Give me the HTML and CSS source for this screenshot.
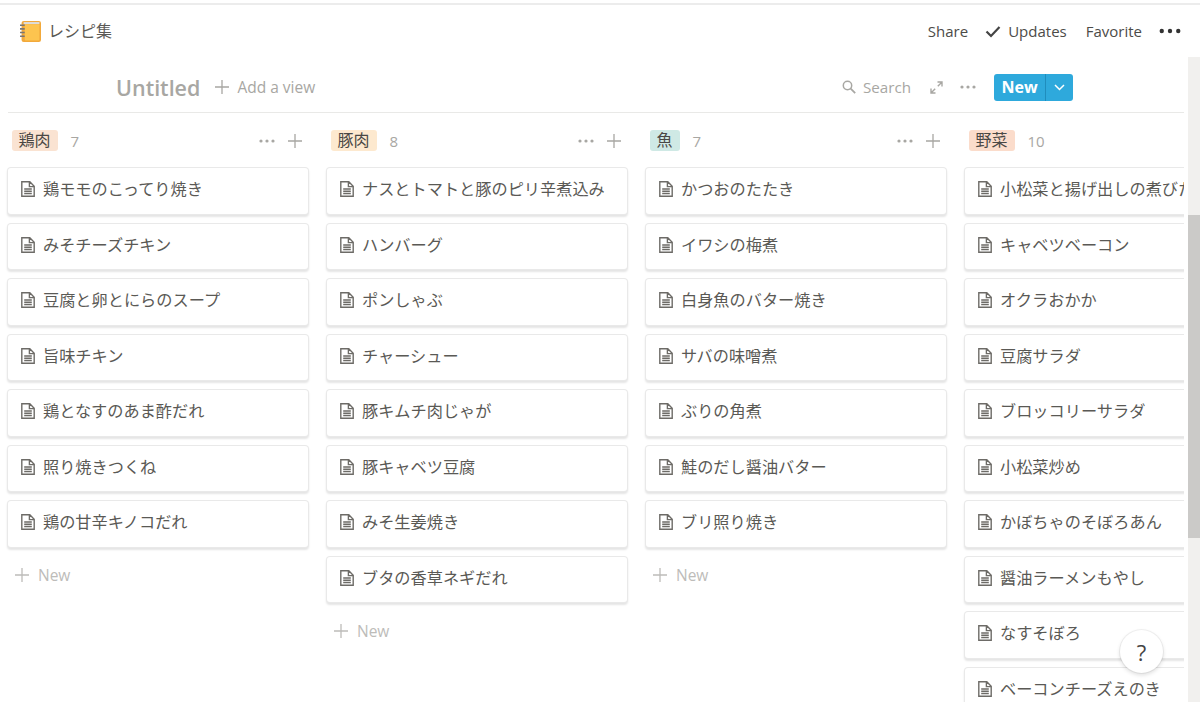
FILE: index.html
```html
<!DOCTYPE html>
<html lang="ja">
<head>
<meta charset="utf-8">
<title>レシピ集</title>
<link rel="stylesheet" href="styles.css">
</head>
<body>
<svg class="defs" width="0" height="0" aria-hidden="true">
  <symbol id="doc" viewBox="0 0 14 16"><path d="M.8.8h8L13.200 5.200V15.200H.8z M8.400.8v4.800H13.200 M3.200 8h7.600 M3.200 10.200h7.600 M3.200 12.500h7.600" fill="none" stroke="currentColor" stroke-width="1.400"/></symbol>
  <symbol id="plus" viewBox="0 0 14 14"><path d="M7 0v14M0 7h14" fill="none" stroke="currentColor" stroke-width="1.300"/></symbol>
  <symbol id="dots" viewBox="0 0 16 4"><circle cx="2" cy="2" r="1.600" fill="currentColor"/><circle cx="8" cy="2" r="1.600" fill="currentColor"/><circle cx="14" cy="2" r="1.600" fill="currentColor"/></symbol>
</svg>
<header class="topbar">
  <div class="crumb">
    <svg class="notebook" viewBox="0 0 20 20" width="21" height="21"><rect x="1.500" y="0" width="18.500" height="20" rx="2" fill="#f2a93b"/><rect x="3.500" y="1" width="15" height="2" fill="#ddd"/><rect x="4.500" y="3" width="14" height="15.500" rx="1" fill="#fdc44f"/><path d="M0 4h4.500M0 7.500h4.500M0 11h4.500M0 14.500h4.500" stroke="#777" stroke-width="1.500"/></svg>
    <span>レシピ集</span>
  </div>
  <nav class="actions">
    <span>Share</span>
    <span class="updates"><svg width="16" height="13" viewBox="0 0 16 13"><path d="M1.500 6.500l4.500 4.500 8.500-9" fill="none" stroke="#444" stroke-width="2.200"/></svg>Updates</span>
    <span>Favorite</span>
    <svg class="more" width="22" height="6"><use href="#dots"/></svg>
  </nav>
</header>
<div class="page">
  <main class="main">
    <div class="toolbar">
      <div class="views">
        <span class="view-name">Untitled</span>
        <span class="add-view"><svg width="14" height="14"><use href="#plus"/></svg>Add a view</span>
      </div>
      <div class="tools">
        <span class="search"><svg width="14" height="14" viewBox="0 0 14 14"><circle cx="5.500" cy="5.500" r="4.200" fill="none" stroke="currentColor" stroke-width="1.500"/><path d="M8.700 8.700l4.500 4.500" stroke="currentColor" stroke-width="1.800"/></svg>Search</span>
        <svg class="expand" width="13" height="13" viewBox="0 0 13 13"><path d="M7.500 1h4.500v4.500M12 1L7.800 5.200M5.500 12H1V7.500M1 12l4.200-4.200" fill="none" stroke="currentColor" stroke-width="1.400"/></svg>
        <svg class="tool-dots" width="16" height="4"><use href="#dots"/></svg>
        <div class="new-btn"><span class="new-label">New</span><span class="new-caret"><svg width="11" height="7" viewBox="0 0 11 7"><path d="M1 1l4.500 4.500L10 1" fill="none" stroke="#fff" stroke-width="1.500"/></svg></span></div>
      </div>
    </div>
    <div class="board">
      <section class="column">
        <div class="col-head"><span class="tag tag-red">鶏肉</span><span class="count">7</span><span class="col-tools"><svg width="16" height="4"><use href="#dots"/></svg><svg width="14" height="14"><use href="#plus"/></svg></span></div>
        <div class="card"><svg class="doc"><use href="#doc"/></svg>鶏モモのこってり焼き</div>
        <div class="card"><svg class="doc"><use href="#doc"/></svg>みそチーズチキン</div>
        <div class="card"><svg class="doc"><use href="#doc"/></svg>豆腐と卵とにらのスープ</div>
        <div class="card"><svg class="doc"><use href="#doc"/></svg>旨味チキン</div>
        <div class="card"><svg class="doc"><use href="#doc"/></svg>鶏となすのあま酢だれ</div>
        <div class="card"><svg class="doc"><use href="#doc"/></svg>照り焼きつくね</div>
        <div class="card"><svg class="doc"><use href="#doc"/></svg>鶏の甘辛キノコだれ</div>
        <div class="add-card"><svg width="14" height="14"><use href="#plus"/></svg>New</div>
      </section>
      <section class="column">
        <div class="col-head"><span class="tag tag-orange">豚肉</span><span class="count">8</span><span class="col-tools"><svg width="16" height="4"><use href="#dots"/></svg><svg width="14" height="14"><use href="#plus"/></svg></span></div>
        <div class="card"><svg class="doc"><use href="#doc"/></svg>ナスとトマトと豚のピリ辛煮込み</div>
        <div class="card"><svg class="doc"><use href="#doc"/></svg>ハンバーグ</div>
        <div class="card"><svg class="doc"><use href="#doc"/></svg>ポンしゃぶ</div>
        <div class="card"><svg class="doc"><use href="#doc"/></svg>チャーシュー</div>
        <div class="card"><svg class="doc"><use href="#doc"/></svg>豚キムチ肉じゃが</div>
        <div class="card"><svg class="doc"><use href="#doc"/></svg>豚キャベツ豆腐</div>
        <div class="card"><svg class="doc"><use href="#doc"/></svg>みそ生姜焼き</div>
        <div class="card"><svg class="doc"><use href="#doc"/></svg>ブタの香草ネギだれ</div>
        <div class="add-card"><svg width="14" height="14"><use href="#plus"/></svg>New</div>
      </section>
      <section class="column">
        <div class="col-head"><span class="tag tag-teal">魚</span><span class="count">7</span><span class="col-tools"><svg width="16" height="4"><use href="#dots"/></svg><svg width="14" height="14"><use href="#plus"/></svg></span></div>
        <div class="card"><svg class="doc"><use href="#doc"/></svg>かつおのたたき</div>
        <div class="card"><svg class="doc"><use href="#doc"/></svg>イワシの梅煮</div>
        <div class="card"><svg class="doc"><use href="#doc"/></svg>白身魚のバター焼き</div>
        <div class="card"><svg class="doc"><use href="#doc"/></svg>サバの味噌煮</div>
        <div class="card"><svg class="doc"><use href="#doc"/></svg>ぶりの角煮</div>
        <div class="card"><svg class="doc"><use href="#doc"/></svg>鮭のだし醤油バター</div>
        <div class="card"><svg class="doc"><use href="#doc"/></svg>ブリ照り焼き</div>
        <div class="add-card"><svg width="14" height="14"><use href="#plus"/></svg>New</div>
      </section>
      <section class="column">
        <div class="col-head"><span class="tag tag-salmon">野菜</span><span class="count">10</span></div>
        <div class="card"><svg class="doc"><use href="#doc"/></svg>小松菜と揚げ出しの煮びたし</div>
        <div class="card"><svg class="doc"><use href="#doc"/></svg>キャベツベーコン</div>
        <div class="card"><svg class="doc"><use href="#doc"/></svg>オクラおかか</div>
        <div class="card"><svg class="doc"><use href="#doc"/></svg>豆腐サラダ</div>
        <div class="card"><svg class="doc"><use href="#doc"/></svg>ブロッコリーサラダ</div>
        <div class="card"><svg class="doc"><use href="#doc"/></svg>小松菜炒め</div>
        <div class="card"><svg class="doc"><use href="#doc"/></svg>かぼちゃのそぼろあん</div>
        <div class="card"><svg class="doc"><use href="#doc"/></svg>醤油ラーメンもやし</div>
        <div class="card"><svg class="doc"><use href="#doc"/></svg>なすそぼろ</div>
        <div class="card"><svg class="doc"><use href="#doc"/></svg>ベーコンチーズえのき</div>
      </section>
    </div>
  </main>
  <div class="scrollbar"><div class="scroll-thumb"></div></div>
</div>
<button class="help">?</button>
</body>
</html>
```

FILE: styles.css
```css
* { box-sizing: border-box; }
html, body { height: 100%; }
body {
  margin: 0;
  height: 702px;
  overflow: hidden;
  background: #fff;
  color: #5a5955;
  font-family: "Open Sans", "Noto Sans CJK JP", sans-serif;
  font-size: 16px;
  font-weight: 400;
  display: flex;
  flex-direction: column;
  padding-top: 3px;
}
.defs { position: absolute; }
.topbar {
  height: 54px;
  flex: none;
  display: flex;
  align-items: center;
  justify-content: space-between;
  padding: 0 19px 0 20px;
  border-top: 2px solid #ececec;
}
.crumb { display: flex; align-items: center; gap: 7px; line-height: 20px; }
.actions { display: flex; align-items: center; font-size: 15px; color: #4c4b48; }
.updates { display: flex; align-items: center; gap: 7px; margin: 0 19px 0 17px; }
.more { margin-left: 17px; color: #333; }
.page { flex: 1; display: flex; min-height: 0; }
.main { width: 1184px; flex: none; overflow: hidden; padding-left: 8px; margin-right: 4px; }
.toolbar {
  height: 56px;
  display: flex;
  justify-content: space-between;
  align-items: center;
  border-bottom: 1px solid #e9e9e7;
  padding: 5px 111px 0 108px;
}
.views { display: flex; align-items: center; gap: 15px; }
.view-name { font-size: 21.500px; font-weight: 600; color: #a8a7a3; }
.add-view { display: flex; align-items: center; gap: 8px; font-size: 15.500px; color: #a8a7a3; }
.tools { display: flex; align-items: center; color: #a8a7a3; }
.search { display: flex; align-items: center; gap: 7px; font-size: 15.200px; color: #a8a7a3; }
.expand { margin-left: 19px; }
.tool-dots { margin-left: 17px; }
.new-btn { margin-left: 18px; display: flex; height: 27px; width: 79px; border-radius: 3px; background: #2ea9dc; color: #fff; font-weight: 700; font-size: 16px; }
.new-label { width: 52px; display: flex; align-items: center; justify-content: center; border-right: 1px solid #1f8dbd; }
.new-caret { flex: 1; display: flex; align-items: center; justify-content: center; }
.board { display: flex; gap: 17px; width: 1400px; margin-left: -1px; }
.column { width: 302px; flex: none; }
.col-head { height: 54px; display: flex; align-items: center; padding: 3px 7px 2px 4.500px; }
.tag { height: 21px; line-height: 21px; padding: 0 7px; border-radius: 3px; color: #4a4845; }
.tag-red { background: #fae3d2; }
.tag-orange { background: #fde9cf; }
.tag-teal { background: #cfe9e5; }
.tag-salmon { background: #fbdccb; }
.count { margin-left: 13px; font-size: 15px; color: #a8a7a3; }
.col-tools { margin-left: auto; display: flex; align-items: center; gap: 13px; color: #a8a7a3; }
.card {
  height: 47.500px;
  margin-bottom: 8px;
  display: flex;
  align-items: center;
  gap: 8px;
  padding: 0 0 3px 14px;
  white-space: nowrap;
  overflow: hidden;
  background: #fff;
  border-radius: 4px;
  box-shadow: inset 0 0 0 1px rgba(15,15,15,.09), 0 2px 2px rgba(15,15,15,.11);
  font-size: 16.200px;
  line-height: 22px;
}
.doc { width: 14px; height: 16px; flex: none; color: #6d6b67; }
.add-card { display: flex; align-items: center; gap: 9px; padding: 2px 0 0 8px; height: 30px; font-size: 15.500px; color: #bdbcb9; margin-top: 11.500px; }
.scrollbar { width: 12px; flex: none; background: #f1f0ee; }
.scroll-thumb { height: 323px; margin-top: 158px; background: #cbcac8; }
.help {
  position: absolute;
  left: 1120px;
  top: 630px;
  width: 43px;
  height: 43px;
  border-radius: 50%;
  border: 0;
  background: #fff;
  box-shadow: 0 0 0 1px rgba(15,15,15,.05), 0 2px 4px rgba(15,15,15,.14);
  color: #444;
  font: 22px "Open Sans", sans-serif;
  padding: 0;
}
```
